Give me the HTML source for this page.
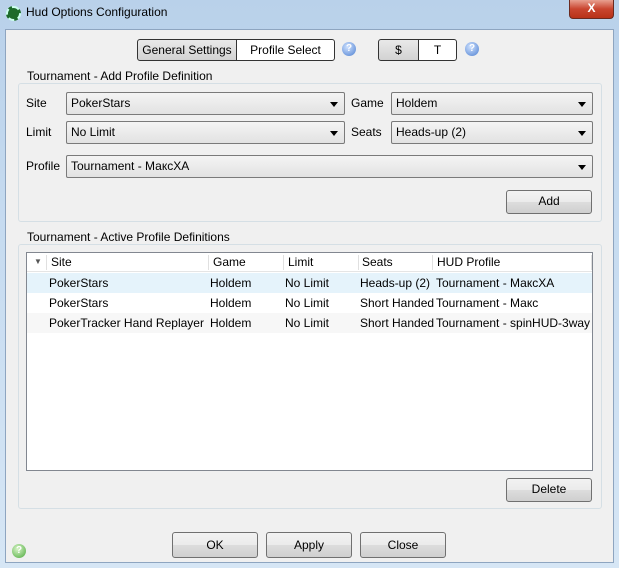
<!DOCTYPE html><html><head><style>
*{box-sizing:border-box;margin:0;padding:0}
body{width:619px;height:568px;font-family:"Liberation Sans",sans-serif;font-size:12px;color:#000;position:relative;overflow:hidden;background:linear-gradient(#b9d1ea,#c6dbf0 40%,#d6e6f5)}
.a{position:absolute}
.client{left:5px;top:29px;width:609px;height:534px;background:#f0f0f0;border:1px solid #8ea5c0}
.btn{position:absolute;border:1px solid #707070;border-radius:3px;background:linear-gradient(#f2f2f2 0,#ebebeb 50%,#dddddd 50%,#cfcfcf);text-align:center;line-height:21px}
.combo{position:absolute;border:1px solid #7a7a7a;border-radius:2px;background:linear-gradient(#f4f4f4,#e2e2e2);padding-left:4px;line-height:20px;height:23px}
.combo:after{content:"";position:absolute;right:6px;top:9px;border-left:4px solid transparent;border-right:4px solid transparent;border-top:5px solid #000}
.grp{position:absolute;border:1px solid #d5dfe5;border-radius:3px}
.gt{position:absolute;background:#f0f0f0;padding:0 2px}
.lbl{position:absolute}
.q{position:absolute;width:14px;height:14px;border-radius:50%;background:radial-gradient(circle at 40% 35%,#cfe2ff,#4d7fd0);color:#fff;font-size:10px;font-weight:bold;text-align:center;line-height:14px}
table{border-collapse:collapse}
.tbl{left:26px;top:252px;width:567px;height:219px;background:#fff;border:1px solid #828790}
.row{position:absolute;left:0;width:565px;height:20px;line-height:20px}
.row span,.hdr span{position:absolute;white-space:nowrap}
.hdr{position:absolute;left:0;top:0;width:565px;height:19px;line-height:18px;border-bottom:1px solid #e5e5e5;background:#fff}
.hdr i{position:absolute;top:2px;width:1px;height:15px;background:#e0e0e0}
</style></head><body>
<div class="a" style="left:6px;top:6px;width:15px;height:15px;border-radius:50%;background:#1d6b2a;border:2px dashed #cfe"></div>
<div class="a" style="left:26px;top:5px;font-size:12px">Hud Options Configuration</div>
<div class="a" style="left:569px;top:0;width:45px;height:19px;border:1px solid #6a2a20;border-top:none;border-radius:0 0 4px 4px;background:linear-gradient(#e8a090,#c9452f 50%,#b83218);color:#fff;font-weight:bold;text-align:center;line-height:17px;font-size:12px">X</div>
<div class="a client"></div>
<div class="btn" style="left:137px;top:39px;width:100px;height:22px;border-radius:3px 0 0 3px;border-color:#333;background:linear-gradient(#e9e9e9,#d2d2d2)">General Settings</div>
<div class="btn" style="left:236px;top:39px;width:99px;height:22px;border-radius:0 3px 3px 0;border-color:#333;background:#fff">Profile Select</div>
<div class="q" style="left:342px;top:42px">?</div>
<div class="btn" style="left:378px;top:39px;width:41px;height:22px;border-radius:3px 0 0 3px;border-color:#333;background:linear-gradient(#e9e9e9,#d2d2d2)">$</div>
<div class="btn" style="left:418px;top:39px;width:39px;height:22px;border-radius:0 3px 3px 0;border-color:#333;background:#fff">T</div>
<div class="q" style="left:465px;top:42px">?</div>

<div class="grp" style="left:18px;top:83px;width:584px;height:139px"></div>
<div class="gt" style="left:25px;top:69px">Tournament - Add Profile Definition</div>
<div class="lbl" style="left:26px;top:96px">Site</div>
<div class="combo" style="left:66px;top:92px;width:279px">PokerStars</div>
<div class="lbl" style="left:351px;top:96px">Game</div>
<div class="combo" style="left:391px;top:92px;width:202px">Holdem</div>
<div class="lbl" style="left:26px;top:125px">Limit</div>
<div class="combo" style="left:66px;top:121px;width:279px">No Limit</div>
<div class="lbl" style="left:351px;top:125px">Seats</div>
<div class="combo" style="left:391px;top:121px;width:202px">Heads-up (2)</div>
<div class="lbl" style="left:26px;top:159px">Profile</div>
<div class="combo" style="left:66px;top:155px;width:527px">Tournament - МаксХА</div>
<div class="btn" style="left:506px;top:190px;width:86px;height:24px">Add</div>

<div class="grp" style="left:18px;top:244px;width:584px;height:265px"></div>
<div class="gt" style="left:25px;top:230px">Tournament - Active Profile Definitions</div>
<div class="a tbl">
<div class="hdr"><span style="left:7px;top:0;font-size:8px;color:#555">▼</span><i style="left:19px"></i><span style="left:24px">Site</span><i style="left:181px"></i><span style="left:186px">Game</span><i style="left:256px"></i><span style="left:261px">Limit</span><i style="left:331px"></i><span style="left:335px">Seats</span><i style="left:405px"></i><span style="left:410px">HUD Profile</span><i style="left:564px"></i></div>
<div class="row" style="top:20px;background:#e5f3fb"><span style="left:22px">PokerStars</span><span style="left:183px">Holdem</span><span style="left:258px">No Limit</span><span style="left:333px">Heads-up (2)</span><span style="left:409px">Tournament - МаксХА</span></div>
<div class="row" style="top:40px"><span style="left:22px">PokerStars</span><span style="left:183px">Holdem</span><span style="left:258px">No Limit</span><span style="left:333px">Short Handed</span><span style="left:409px">Tournament - Макс</span></div>
<div class="row" style="top:60px;background:#f7f7f7"><span style="left:22px">PokerTracker Hand Replayer</span><span style="left:183px">Holdem</span><span style="left:258px">No Limit</span><span style="left:333px">Short Handed</span><span style="left:409px;width:156px;overflow:hidden">Tournament - spinHUD-3way</span></div>
</div>
<div class="btn" style="left:506px;top:478px;width:86px;height:24px">Delete</div>

<div class="btn" style="left:172px;top:532px;width:86px;height:26px;line-height:24px">OK</div>
<div class="btn" style="left:266px;top:532px;width:86px;height:26px;line-height:24px">Apply</div>
<div class="btn" style="left:360px;top:532px;width:86px;height:26px;line-height:24px">Close</div>
<div class="q" style="left:12px;top:544px;background:radial-gradient(circle at 40% 35%,#d8f5c8,#4aa83a)">?</div>
</body></html>
